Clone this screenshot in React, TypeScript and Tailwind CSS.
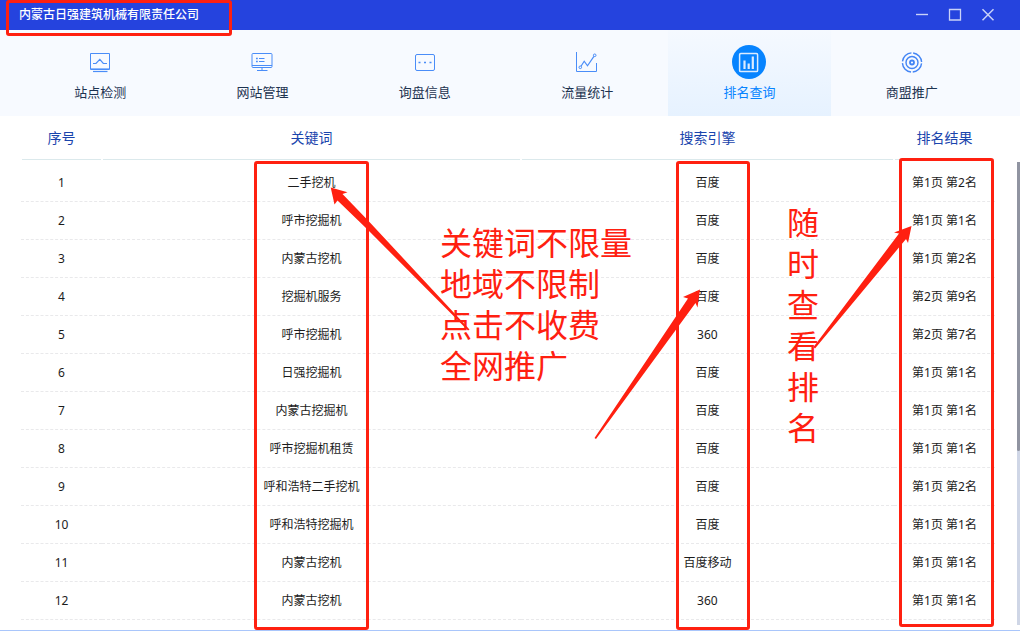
import type { ReactNode } from "react";

const BLUE = "#4a8df8";

function MonitorIcon() {
  return (
    <svg width="22" height="22" viewBox="0 0 22 22" fill="none" stroke={BLUE} aria-hidden="true">
      <path d="M1.500 2.500h19v16h-19z" />
      <path d="M1 17.500h20" strokeOpacity=".6" />
      <path d="M4 12.500h3l3.800-4.200 3.500 4.200H18" strokeWidth="1.200" />
      <path d="M4 20.500h14.500" strokeWidth="1.200" />
    </svg>
  );
}

function SiteIcon() {
  return (
    <svg width="22" height="22" viewBox="0 0 22 22" fill="none" stroke={BLUE} aria-hidden="true">
      <rect x="1" y="2.500" width="20" height="14" rx="1" />
      <path d="M1 14.500h20M11 16.500v3M6 19.500h10.500" />
      <path d="M8 7.500h5.500M8 10.500h5.500" />
      <path d="M5 7.500h1.800M5 10.500h1.800" strokeWidth="1.600" />
    </svg>
  );
}

function MessageIcon() {
  return (
    <svg width="22" height="22" viewBox="0 0 22 22" fill="none" stroke={BLUE} aria-hidden="true">
      <rect x="1.500" y="3.500" width="19" height="16" rx="1.500" />
      <path d="M4.500 11.500h2M10 11.500h2M15.500 11.500h2" strokeWidth="1.400" />
    </svg>
  );
}

function TrafficIcon() {
  return (
    <svg width="22" height="22" viewBox="0 0 22 22" fill="none" stroke={BLUE} aria-hidden="true">
      <path d="M.5 1v19.500h20V12" />
      <circle cx="4.300" cy="16.300" r="1.300" />
      <circle cx="18.700" cy="4.300" r="1.300" />
      <path d="M5 15.200l3.200-5 3.300 4.600 6.400-9.400" strokeWidth="1.200" />
    </svg>
  );
}

function RankIcon() {
  return (
    <svg width="34" height="34" viewBox="0 0 34 34" fill="none" aria-hidden="true">
      <circle cx="17" cy="17" r="17" fill="#0784ff" />
      <rect x="7.600" y="8.600" width="18" height="18" rx="1.200" stroke="#dcecff" strokeWidth="1.500" />
      <path d="M12.500 24V15.500M16.700 24v-5.500M20.800 24V11.500" stroke="#dcecff" strokeWidth="2.200" />
    </svg>
  );
}

function TargetIcon() {
  return (
    <svg width="22" height="22" viewBox="0 0 22 22" fill="none" stroke="#4385f5" aria-hidden="true">
      <circle cx="11" cy="11.500" r="9.600" strokeWidth="1.400" strokeDasharray="13.300 1.780" strokeDashoffset="-.9" />
      <circle cx="11" cy="11.500" r="6" strokeWidth="1.400" />
      <circle cx="11" cy="11.500" r="2" strokeWidth="1.800" />
    </svg>
  );
}

const tabs: { label: string; icon: ReactNode; active?: boolean }[] = [
  { label: "站点检测", icon: <MonitorIcon /> },
  { label: "网站管理", icon: <SiteIcon /> },
  { label: "询盘信息", icon: <MessageIcon /> },
  { label: "流量统计", icon: <TrafficIcon /> },
  { label: "排名查询", icon: <RankIcon />, active: true },
  { label: "商盟推广", icon: <TargetIcon /> },
];

const headings = ["序号", "关键词", "搜索引擎", "排名结果"];

const rows = [
  ["二手挖机", "百度", "第1页 第2名"],
  ["呼市挖掘机", "百度", "第1页 第1名"],
  ["内蒙古挖机", "百度", "第1页 第2名"],
  ["挖掘机服务", "百度", "第2页 第9名"],
  ["呼市挖掘机", "360", "第2页 第7名"],
  ["日强挖掘机", "百度", "第1页 第1名"],
  ["内蒙古挖掘机", "百度", "第1页 第1名"],
  ["呼市挖掘机租赁", "百度", "第1页 第1名"],
  ["呼和浩特二手挖机", "百度", "第1页 第2名"],
  ["呼和浩特挖掘机", "百度", "第1页 第1名"],
  ["内蒙古挖机", "百度移动", "第1页 第1名"],
  ["内蒙古挖机", "360", "第1页 第1名"],
];

function TitleBar() {
  return (
    <header className="flex h-[30px] items-center justify-between bg-[#2543de] pr-[25px] pl-[19px] text-white">
      <h1 className="text-xs font-medium">内蒙古日强建筑机械有限责任公司</h1>
      <div className="flex items-center gap-[19px] text-[#c9d2f8]">
        <button type="button" aria-label="最小化">
          <svg width="14" height="14" viewBox="0 0 14 14" stroke="currentColor" fill="none">
            <path d="M1 6.500h12" strokeWidth="1.400" />
          </svg>
        </button>
        <button type="button" aria-label="最大化">
          <svg width="14" height="14" viewBox="0 0 14 14" stroke="currentColor" fill="none">
            <path d="M1.500 1.500h11v10.500h-11z" strokeWidth="1.300" />
          </svg>
        </button>
        <button type="button" aria-label="关闭">
          <svg width="14" height="14" viewBox="0 0 14 14" stroke="currentColor" fill="none">
            <path d="M1.500 1.200l11 11M12.500 1.200l-11 11" strokeWidth="1.500" />
          </svg>
        </button>
      </div>
    </header>
  );
}

function Tabs() {
  return (
    <nav className="grid grid-cols-6 bg-[#f7faff] pr-[27px] pl-[19px]">
      {tabs.map((tab) => (
        <a
          key={tab.label}
          href="#"
          aria-current={tab.active ? "page" : undefined}
          className={
            tab.active
              ? "flex h-[86px] flex-col items-center bg-linear-to-b from-[#f5f9ff] to-[#e6f2ff] pt-[15px] text-[13px] leading-5 text-[#0784ff]"
              : "flex h-[86px] flex-col items-center pt-[15px] text-[13px] leading-5 text-[#1d3350]"
          }
        >
          <span className="mb-[3px] flex h-[34px] items-center">{tab.icon}</span>
          {tab.label}
        </a>
      ))}
    </nav>
  );
}

function RankTable() {
  return (
    <table className="w-full table-fixed border-separate border-spacing-0 text-center">
      <colgroup>
        <col className="w-[81px]" />
        <col className="w-[43%]" />
        <col />
        <col className="w-[101px]" />
      </colgroup>
      <thead>
        <tr>
          {headings.map((heading) => (
            <th key={heading} scope="col" className="p-0 pb-1 text-sm font-normal text-[#1a45ad]">
              <div className="mx-px h-11 border-b border-[#dbe9ec] leading-[44px]">{heading}</div>
            </th>
          ))}
        </tr>
      </thead>
      <tbody className="text-xs text-[#1c1c1c]">
        {rows.map((row, index) => (
          <tr key={index} className="h-[38px]">
            <td className="border-b border-dashed border-[#e9e9eb] p-0">{index + 1}</td>
            {row.map((cell, column) => (
              <td key={column} className="border-b border-dashed border-[#e9e9eb] p-0 whitespace-nowrap">
                {cell}
              </td>
            ))}
          </tr>
        ))}
      </tbody>
    </table>
  );
}

function Annotations() {
  return (
    <div className="pointer-events-none absolute inset-0 overflow-hidden text-[32px] leading-[41px] text-[#ff2010]">
      <div className="absolute top-0 left-[6px] h-9 w-[226px] rounded-[3px] border-3 border-[#ff2010]" />
      <div className="absolute top-[161px] left-[254px] h-[469px] w-[115px] rounded-[3px] border-3 border-[#ff2010]" />
      <div className="absolute top-[161px] left-[676px] h-[469px] w-[74px] rounded-[3px] border-3 border-[#ff2010]" />
      <div className="absolute top-[158px] left-[899px] h-[469px] w-[95px] rounded-[3px] border-3 border-[#ff2010]" />
      <p className="absolute top-[222px] left-[440px] whitespace-nowrap">
        关键词不限量
        <br />
        地域不限制
        <br />
        点击不收费
        <br />
        全网推广
      </p>
      <p className="absolute top-[202px] left-[787px] w-8">随时查看排名</p>
      <svg className="absolute top-0 left-0" width="1020" height="631" viewBox="0 0 1020 631" fill="currentColor" aria-hidden="true">
        <path d="M330.700 187.500L347.500 192.300 342.500 194 369 221.500 469.500 329.500 468 330.500 367 229 337.500 200.500 334.500 204.500z" />
        <path d="M700 289.500L683 297 688 298.500 594.500 438 596 439 695.500 303 697.500 307.500z" />
        <path d="M911.500 226L894 232.500 899 233.500 813.500 347 815 348.500 906 239 908 243z" />
      </svg>
    </div>
  );
}

export default function App() {
  return (
    <div className="relative flex min-h-screen flex-col bg-white font-['Noto_Sans','Noto_Sans_CJK_SC',sans-serif]">
      <TitleBar />
      <Tabs />
      <main className="flex flex-1 border-b border-[#a9c6fb]">
        <div className="min-w-0 flex-1 pr-[22px] pl-[21px]">
          <RankTable />
        </div>
        <div className="mt-[46px] mb-[5px] w-[3px] bg-[#cfd6e6]">
          <div className="h-[289px] rounded-b-sm bg-[#9094a1]" />
        </div>
      </main>
      <Annotations />
    </div>
  );
}
